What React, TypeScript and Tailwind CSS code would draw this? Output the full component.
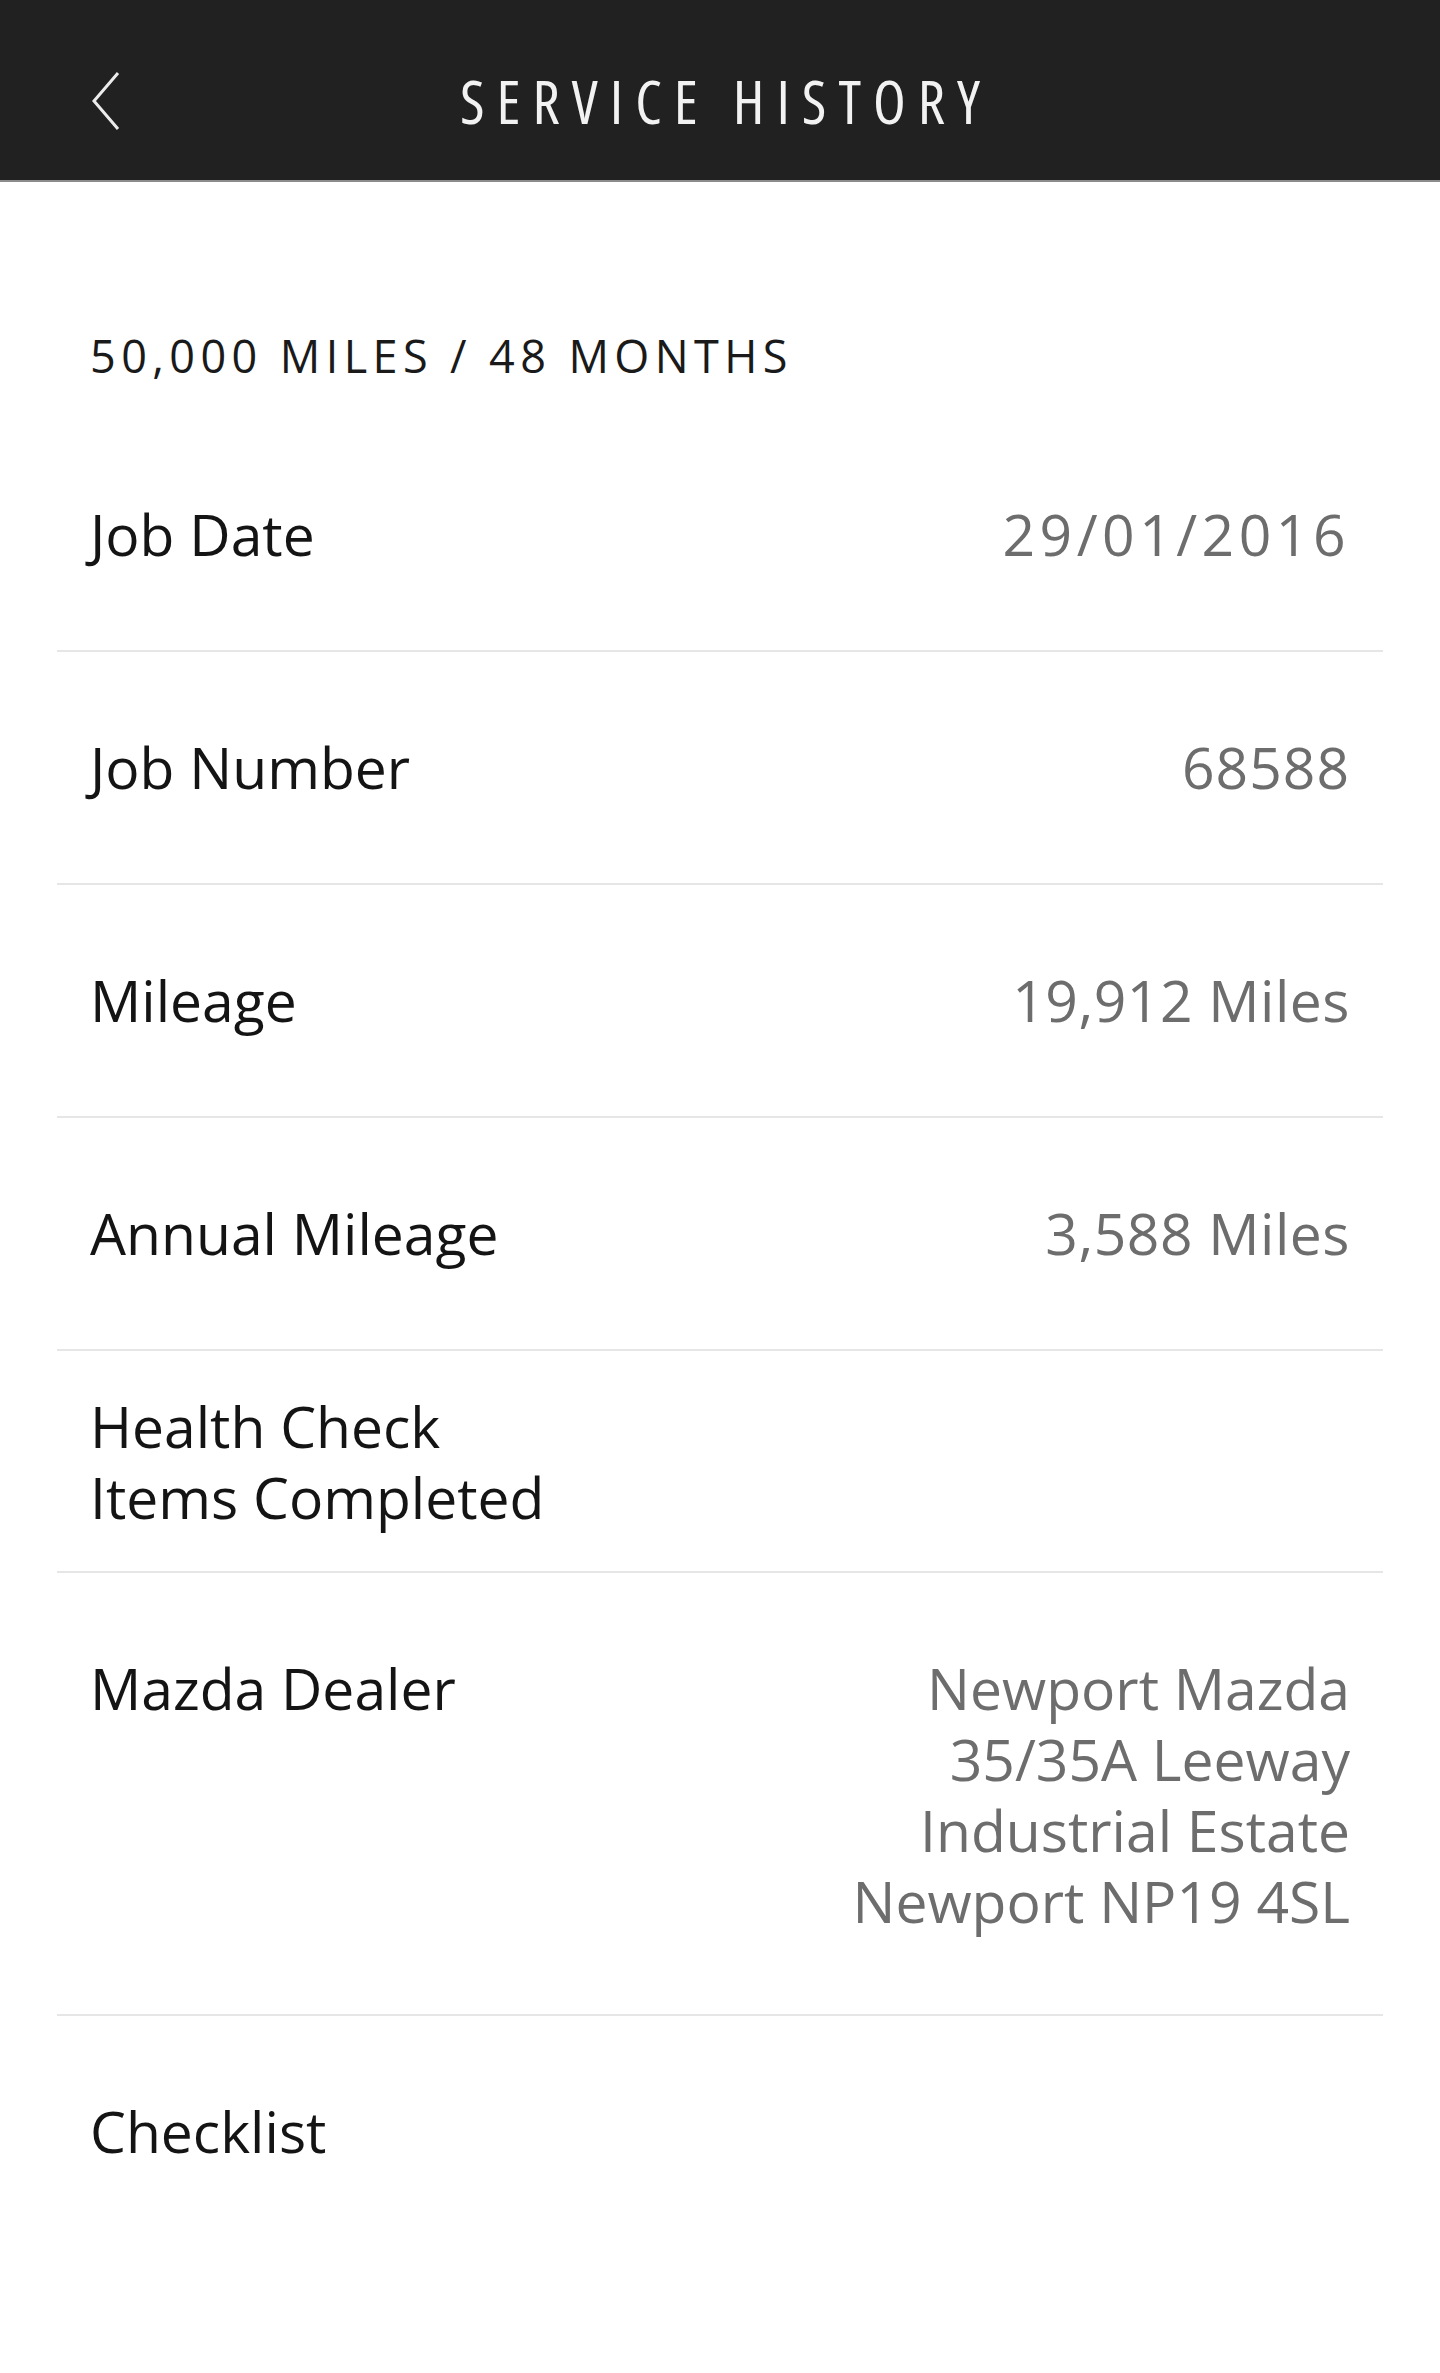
import type { ReactNode } from 'react'

type Row = { label: ReactNode; value?: ReactNode; valueClass?: string; compact?: boolean }

const rows: Row[] = [
  { label: 'Job Date', value: '29/01/2016', valueClass: 'tracking-[4.5px]' },
  { label: 'Job Number', value: '68588', valueClass: 'tracking-[1px]' },
  { label: 'Mileage', value: '19,912 Miles', valueClass: 'tracking-[0.5px]' },
  { label: 'Annual Mileage', value: '3,588 Miles', valueClass: 'tracking-[0.5px]' },
  { label: <>Health Check<br />Items Completed</>, compact: true },
  {
    label: 'Mazda Dealer',
    value: <>Newport Mazda<br />35/35A Leeway<br />Industrial Estate<br />Newport NP19 4SL</>,
  },
]

function Divider() {
  return <div className="mx-[57px] h-[2px] bg-[#e6e6e6]" />
}

export default function App() {
  return (
    <div className="min-h-[2373px] bg-white text-[#141414] font-['Open_Sans','Noto_Sans',sans-serif]">
      {/* Top bar */}
      <header className="h-[182px] bg-[#212121] border-b-2 border-[#8c8c8c] grid grid-cols-[1fr_auto_1fr] items-center px-[92px] pt-[22px]">
        <button aria-label="Back" className="justify-self-start w-[28px] h-[58px]">
          <svg width="28" height="58" viewBox="0 0 28 58" fill="none">
            <polyline points="26,1 2,29 26,57" stroke="#ececec" strokeWidth="3" strokeLinejoin="miter" />
          </svg>
        </button>
        <h1 className="pl-[12px] text-[60px] leading-[60px] text-[#f2f2f2] font-normal tracking-[12px] [font-stretch:75%]">SERVICE HISTORY</h1>
        <div />
      </header>

      {/* Section title */}
      <div className="pl-[90px] pt-[147px] pb-[36px] text-[45px] leading-[54px] font-medium tracking-[0.12em] text-[#1a1a1a]">
        50,000 MILES / 48 MONTHS
      </div>

      {rows.map((r, i) => (
        <div key={i}>
          <div
            className={
              'flex justify-between items-start px-[90px] text-[57px] leading-[71px] ' +
              (r.compact ? 'pt-[40px] pb-[38px]' : i === rows.length - 1 ? 'pt-[80px] pb-[77px]' : 'py-[80px]')
            }
          >
            <span>{r.label}</span>
            {r.value && <span className={'text-right text-[#6d6d6d] ' + (r.valueClass ?? '')}>{r.value}</span>}
          </div>
          <Divider />
        </div>
      ))}

      <div className="px-[90px] pt-[80px] text-[57px] leading-[71px]">Checklist</div>
    </div>
  )
}
